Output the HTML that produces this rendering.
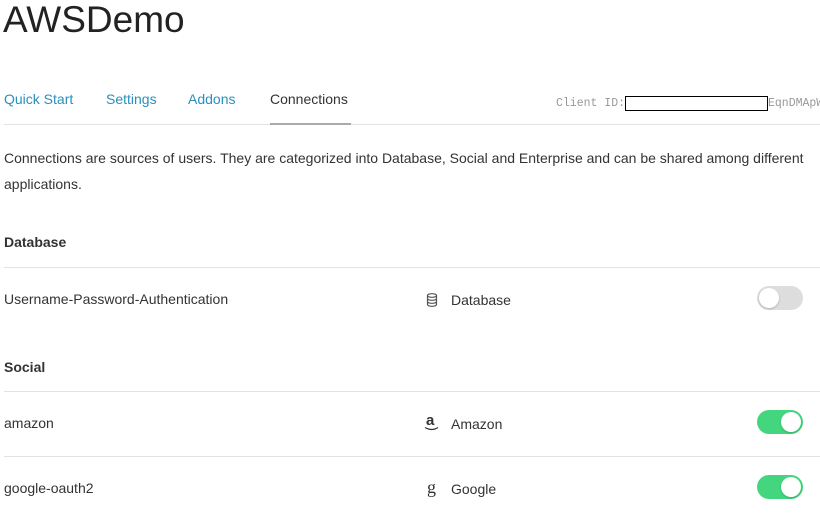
<!DOCTYPE html>
<html><head><style>
body{margin:0;width:820px;height:523px;overflow:hidden;background:#fff;font-family:"Liberation Sans",sans-serif;color:#333;position:relative}
.a{position:absolute;white-space:nowrap}
.tab{font-size:14px;color:#2a8fbd;top:91px}
.line{position:absolute;left:4px;right:0;height:1px;background:#e2e2e2}
.t{font-size:14px;color:#333}
.h{font-size:14px;font-weight:bold;color:#333}
.tg{position:absolute;left:757px;width:46px;height:24px;border-radius:12px}
.tg i{position:absolute;top:2px;width:20px;height:20px;border-radius:50%;background:#fff;box-shadow:0 1px 2px rgba(0,0,0,.2)}
</style></head><body>
<div class="a" style="left:3px;top:0;font-size:37px;color:#222;line-height:40px">AWSDemo</div>
<div class="a tab" style="left:4px">Quick Start</div>
<div class="a tab" style="left:106px">Settings</div>
<div class="a tab" style="left:188px">Addons</div>
<div class="a tab" style="left:270px;color:#333">Connections</div>
<div class="line" style="top:124px;left:4px"></div>
<div style="position:absolute;left:270px;top:123px;width:81px;height:2px;background:#aaa"></div>
<div class="a" style="left:556px;top:97px;font-family:'Liberation Mono',monospace;font-size:11.5px;color:#999">Client ID:</div>
<div style="position:absolute;left:625px;top:96px;width:141px;height:13px;border:1px solid #000"></div>
<div class="a" style="left:768px;top:97px;font-family:'Liberation Mono',monospace;font-size:11.5px;color:#999">EqnDMApW</div>
<div class="a t" style="left:4px;top:145px;line-height:26px;white-space:normal;width:816px">Connections are sources of users. They are categorized into Database, Social and Enterprise and can be shared among different applications.</div>
<div class="a h" style="left:4px;top:234px">Database</div>
<div class="line" style="top:267px"></div>
<div class="a t" style="left:4px;top:291px">Username-Password-Authentication</div>
<svg class="a" style="left:426px;top:293px" width="12" height="14" viewBox="0 0 12 14" fill="none" stroke="#555" stroke-width="1.2"><ellipse cx="6" cy="2.5" rx="4.5" ry="1.8"/><path d="M1.5 2.5v9c0 1 2 1.8 4.5 1.8s4.5-.8 4.5-1.8v-9M1.5 5.5c0 1 2 1.8 4.5 1.8s4.5-.8 4.5-1.8M1.5 8.5c0 1 2 1.8 4.5 1.8s4.5-.8 4.5-1.8"/></svg>
<div class="a t" style="left:451px;top:292px">Database</div>
<div class="tg" style="top:286px;background:#ddd"><i style="left:2px"></i></div>
<div class="a h" style="left:4px;top:359px">Social</div>
<div class="line" style="top:391px"></div>
<div class="a t" style="left:4px;top:415px">amazon</div>
<div class="a" style="left:426px;top:412px;font-size:15px;font-weight:bold;color:#333">a</div>
<svg class="a" style="left:424px;top:426px" width="16" height="6" viewBox="0 0 16 6" fill="none" stroke="#333" stroke-width="1.2"><path d="M1 1.5q7 4 13 0"/></svg>
<div class="a t" style="left:451px;top:416px">Amazon</div>
<div class="tg" style="top:410px;background:#44d67e"><i style="left:24px"></i></div>
<div class="line" style="top:456px"></div>
<div class="a t" style="left:4px;top:480px">google-oauth2</div>
<div class="a" style="left:427px;top:477px;font-family:'Liberation Serif',serif;font-size:18px;color:#333">g</div>
<div class="a t" style="left:451px;top:481px">Google</div>
<div class="tg" style="top:475px;background:#44d67e"><i style="left:24px"></i></div>
</body></html>
